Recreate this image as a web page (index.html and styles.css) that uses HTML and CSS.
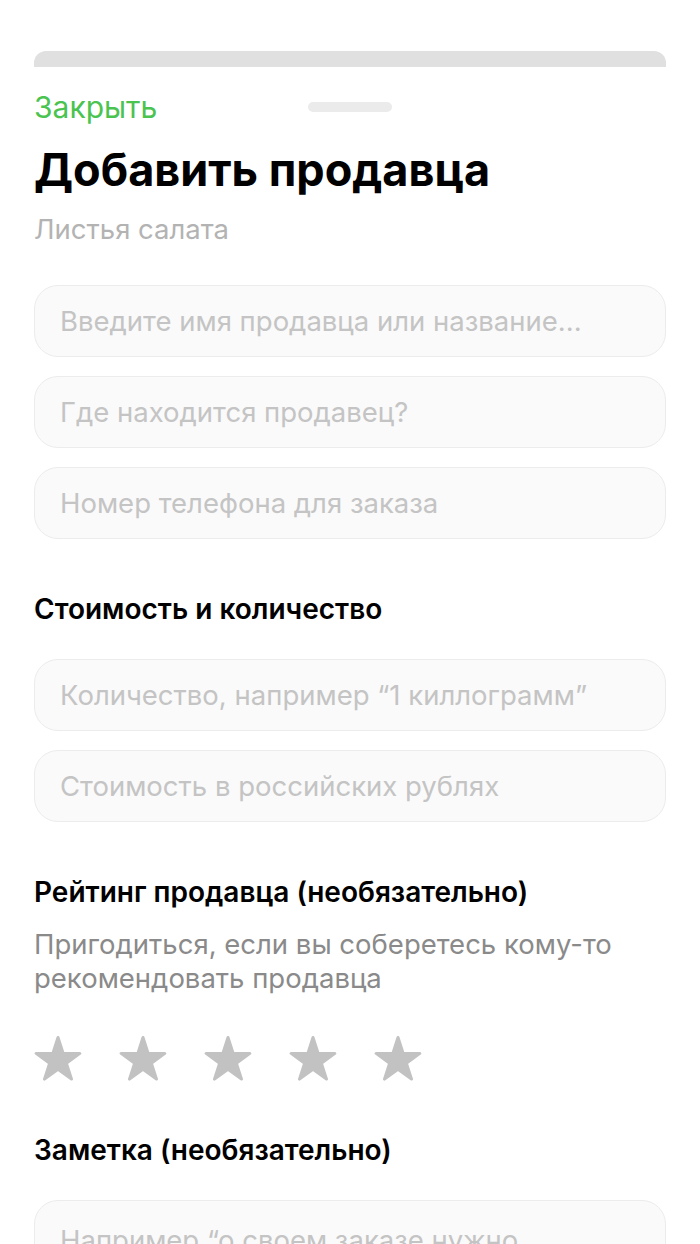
FILE: index.html
```html
<!DOCTYPE html>
<html lang="ru">
<head>
    <meta charset="UTF-8">
    <meta name="viewport" content="width=device-width, initial-scale=1.0">
    <title>Добавить продавца</title>
    <link rel="stylesheet" href="styles.css">
</head>
<body>
    <svg class="defs" width="0" height="0" aria-hidden="true">
        <symbol id="star" viewBox="0 0 48 46">
            <polygon points="24,2.5 29.17,18.39 45.87,18.39 32.36,28.22 37.52,44.11 24,34.29 10.48,44.11 15.64,28.22 2.13,18.39 18.83,18.39"/>
        </symbol>
    </svg>

    <div class="sheet">
        <div class="sheet-top"></div>

        <div class="sheet-header">
            <button class="close-btn">Закрыть</button>
            <span class="grabber"></span>
        </div>

        <h1>Добавить продавца</h1>
        <p class="subtitle">Листья салата</p>

        <div class="fields">
            <input type="text" placeholder="Введите имя продавца или название...">
            <input type="text" placeholder="Где находится продавец?">
            <input type="text" placeholder="Номер телефона для заказа">
        </div>

        <h2>Стоимость и количество</h2>
        <div class="fields">
            <input type="text" placeholder="Количество, например “1 киллограмм”">
            <input type="text" placeholder="Стоимость в российских рублях">
        </div>

        <h2>Рейтинг продавца (необязательно)</h2>
        <p class="hint">Пригодиться, если вы соберетесь кому-то рекомендовать продавца</p>

        <div class="stars">
            <svg class="star"><use href="#star"/></svg>
            <svg class="star"><use href="#star"/></svg>
            <svg class="star"><use href="#star"/></svg>
            <svg class="star"><use href="#star"/></svg>
            <svg class="star"><use href="#star"/></svg>
        </div>

        <h2 class="note-title">Заметка (необязательно)</h2>
        <textarea class="note" placeholder="Например “о своем заказе нужно предупредить заранее”"></textarea>
    </div>
</body>
</html>
```

FILE: styles.css
```css
* {
    margin: 0;
    padding: 0;
    box-sizing: border-box;
}

body {
    font-family: Inter, Roboto, "Liberation Sans", sans-serif;
    background-color: #fff;
    color: #000;
}

.defs {
    position: absolute;
}

.sheet {
    padding: 51px 34px 0;
}

.sheet-top {
    height: 16px;
    background-color: #e0e0e0;
    border-radius: 12px 12px 0 0;
}

.sheet-header {
    display: grid;
    grid-template-columns: 1fr 84px 1fr;
    align-items: center;
    height: 32px;
    margin-top: 24px;
}

.close-btn {
    justify-self: start;
    background: none;
    border: none;
    font-family: inherit;
    font-size: 30px;
    line-height: 30px;
    color: #4ac34f;
    cursor: pointer;
}

.grabber {
    height: 10px;
    border-radius: 5px;
    background-color: #ebebeb;
}

h1 {
    margin-top: 23px;
    font-size: 45px;
    line-height: 48px;
    font-weight: 700;
}

.subtitle {
    margin-top: 19px;
    font-size: 27.5px;
    line-height: 32px;
    color: #b3b3b3;
}

.fields {
    display: flex;
    flex-direction: column;
    gap: 19px;
    margin-top: 40px;
}

input,
.note {
    width: 100%;
    height: 72px;
    padding: 0 25px;
    border: 1px solid #ececec;
    border-radius: 24px;
    background-color: #fafafa;
    font-family: inherit;
    font-size: 27.5px;
    color: #000;
    outline: none;
}

input::placeholder,
.note::placeholder {
    color: #c4c4c4;
}

h2 {
    margin-top: 54px;
    font-size: 28px;
    line-height: 32px;
    font-weight: 600;
}

h2 + .fields {
    margin-top: 34px;
}

.hint {
    margin-top: 19px;
    font-size: 27.5px;
    line-height: 34px;
    color: #8a8a8a;
}

.stars {
    display: flex;
    gap: 37px;
    margin-top: 40px;
}

.star {
    width: 48px;
    height: 46px;
    fill: #c2c2c2;
    stroke: #c2c2c2;
    stroke-width: 3;
    stroke-linejoin: round;
}

.note-title {
    margin-top: 53px;
}

.note {
    display: block;
    height: 150px;
    margin-top: 34px;
    padding: 22px 25px;
    line-height: 34px;
    resize: none;
}
```
